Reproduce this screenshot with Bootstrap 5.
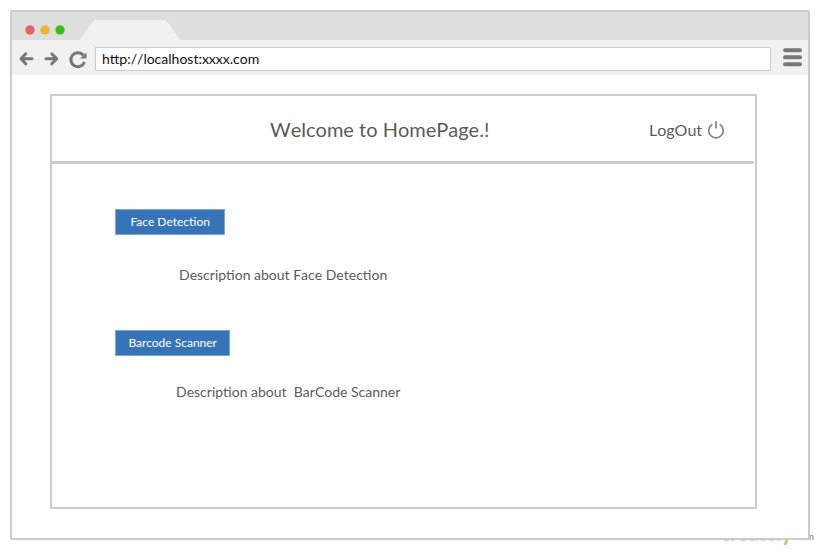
<!DOCTYPE html>
<html lang="en">
<head>
<meta charset="utf-8">
<title>HomePage</title>
<link href="https://cdn.jsdelivr.net/npm/bootstrap@5.3.0/dist/css/bootstrap.min.css" rel="stylesheet">
<style>
body{width:820px;height:550px;padding:10px;overflow:hidden;font-family:Lato,sans-serif;font-kerning:none;color:#5a5a5a;background:#fff}
.browser{width:800px;height:530px;border:2px solid #cbcccb;border-radius:2px;background:#fff;z-index:1}
.tabstrip{height:28px;background:#dddfdc}
.toolbar{height:35px;background:#f1f1f1}
.address{width:676px;height:24px;margin:3px 0 0 7px;padding-left:6px;border:1px solid #cbcccb;color:#111;font-size:14px;line-height:22px}
.page-frame{width:707px;height:415px;margin:19px 0 0 38px;border:2px solid #cbcccb;border-radius:1px}
.page-head{width:702px;height:68px;border-bottom:3px solid #cbcccb}
.page-title{width:220px;margin-left:218px;font-size:20px;line-height:26px}
.logout{margin:2px 0 0 159px;font-size:16px;line-height:20px}
.page-body{padding-left:63px}
.action{height:26px;border:1px solid #7ba5d3;border-radius:0;background:#3673b7;color:#fff;font-size:12px;line-height:24px}
.face{width:110.4px;margin-top:45px}
.barcode{width:115.4px;margin-top:44.5px}
.describe{font-size:14px;line-height:20px;white-space:pre}
.describe-face{margin:30px 0 0 64px}
.describe-barcode{margin:26px 0 0 61px}
.watermark{right:6px;bottom:1px;font-size:20px;line-height:24px;color:#b9d8ef}
.watermark .tail{color:#f6a84b;margin-right:1px}
.watermark .suffix{position:relative;top:-1px;font-size:10px;color:#777}
</style>
<script src="https://cdn.jsdelivr.net/npm/bootstrap@5.3.0/dist/js/bootstrap.bundle.min.js"></script>
</head>
<body class="position-relative">
<div class="watermark position-absolute fw-bold">createl<span class="tail">y</span><span class="suffix fw-normal">.com</span></div>
<main class="browser position-relative">
  <div class="tabstrip">
    <svg class="d-block" width="180" height="28">
      <circle cx="18" cy="18" r="4.7" fill="#eb5f6d"/><circle cx="33" cy="18" r="4.7" fill="#ecb62f"/><circle cx="48" cy="18" r="4.7" fill="#38bf18"/>
      <path d="M67.500 28L82 8H154L168.500 28Z" fill="#f1f1f1"/>
    </svg>
  </div>
  <div class="toolbar d-flex align-items-center">
    <svg width="76" height="35" fill="none" stroke="#777" stroke-width="3">
      <path d="M13.800 13.800L9 18.800L13.800 23.800M9.500 18.800H20M39.800 13.800L44.800 18.800L39.800 23.800M44 18.800H34" stroke-linecap="round" stroke-linejoin="round"/>
      <path d="M71.300 15.200A7 7 0 1 0 72.500 21.900"/><path d="M74.500 12.500V18.500H68Z" fill="#777" stroke="none"/>
    </svg>
    <div class="address bg-white">http://localhost:xxxx.com</div>
    <svg width="37" height="35" stroke="#777" stroke-width="4" stroke-linecap="round"><path d="M14 10.200H29M14 17.300H29M14 24.300H29"/></svg>
  </div>
  <section class="page-frame">
    <header class="page-head d-flex align-items-center">
      <h1 class="page-title fw-normal mb-0 text-nowrap">Welcome to HomePage.!</h1>
      <div class="logout d-flex align-items-center">LogOut
        <svg class="ms-1" width="20" height="20" fill="none" stroke="#858585" stroke-width="1.700"><path d="M6.400 4.300A7.300 7.300 0 1 0 13.600 4.300M10 1V8.500"/></svg>
      </div>
    </header>
    <div class="page-body d-flex flex-column align-items-start">
      <button class="action face p-0">Face Detection</button>
      <p class="describe describe-face">Description about Face Detection</p>
      <button class="action barcode p-0">Barcode Scanner</button>
      <p class="describe describe-barcode">Description about  BarCode Scanner</p>
    </div>
  </section>
</main>
</body>
</html>
